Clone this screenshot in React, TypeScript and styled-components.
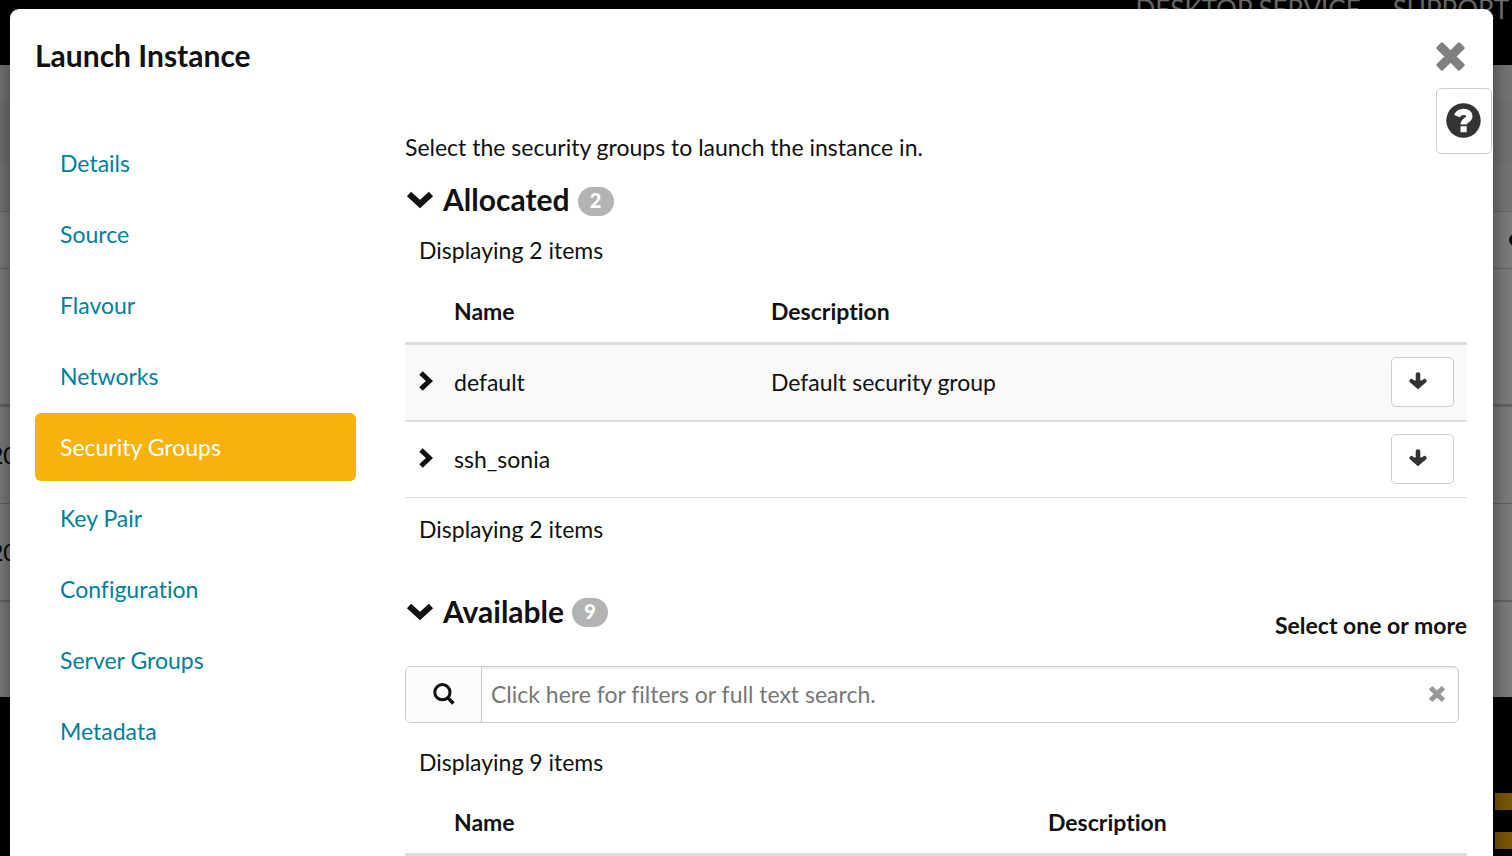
import React from "react";
import styled, { createGlobalStyle } from "styled-components";

const Global = createGlobalStyle`
  * { box-sizing: border-box; }
  body {
    margin: 0;
    background: #000;
    color: #111;
    font: 400 23px/32px Lato, "Open Sans", sans-serif;
    font-variant-ligatures: none;
    overflow: hidden;
  }
  button, input { font: inherit; color: inherit; }
`;

const Backdrop = styled.div`
  position: absolute;
  inset: 0;
  background: rgba(0, 0, 0, 0.5);
`;
const Page = styled.div`
  position: relative;
  min-height: 100vh;
  overflow: hidden;
  background: #000;
`;
const SiteHeader = styled.header`
  height: 65px;
  display: flex;
  justify-content: flex-end;
  gap: 32px;
  padding: 0 3px;
  color: #ddd;
  font-size: 26px;
  line-height: 18px;
`;
const SiteBody = styled.div`
  height: 632px;
  background: #fff;
  display: flex;
  flex-direction: column;
`;
const Band = styled.div<{ $h: number; $bg?: string; $line?: number }>`
  height: ${(p) => p.$h}px;
  background: ${(p) => p.$bg ?? "#fff"};
  border-bottom: ${(p) => p.$line ?? 0}px solid #ccc;
  display: flex;
  align-items: center;
`;
const DateCell = styled.span`
  margin-left: -10px;
`;
const Dot = styled.span`
  width: 12px;
  height: 12px;
  margin-left: auto;
  margin-right: -9px;
  border-radius: 50%;
  background: #111;
`;
const SiteFooter = styled.footer`
  height: 159px;
  display: flex;
  justify-content: flex-end;
  align-items: flex-end;
  padding-bottom: 7px;
`;

const Modal = styled.div`
  position: absolute;
  top: 9px;
  left: 10px;
  right: 19px;
  min-height: 1000px;
  background: #fff;
  border-radius: 9px;
  box-shadow: 0 8px 24px rgba(0, 0, 0, 0.5);
  padding: 0 25px;
`;
const ModalHeader = styled.header`
  display: flex;
  justify-content: space-between;
  align-items: center;
  height: 95px;
  padding-right: 3px;
`;
const Title = styled.h1`
  margin: 0;
  padding-bottom: 4px;
  font-size: 30px;
  line-height: 40px;
  font-weight: 700;
`;
const IconButton = styled.button`
  border: 0;
  background: none;
  padding: 0;
  display: flex;
  color: #808080;
`;
const HelpButton = styled.button`
  position: absolute;
  top: 79px;
  right: 1px;
  width: 56px;
  height: 66px;
  padding: 0 2px 2px 0;
  display: flex;
  align-items: center;
  justify-content: center;
  background: #fff;
  border: 1px solid #ccc;
  border-radius: 5px;
`;
const Columns = styled.div`
  display: grid;
  grid-template-columns: 321px minmax(0, 1fr);
  column-gap: 49px;
`;
const Steps = styled.nav`
  display: flex;
  flex-direction: column;
  gap: 3px;
  padding-top: 25px;
`;
const Step = styled.a<{ $active?: boolean }>`
  height: 68px;
  padding: 18px 25px;
  border-radius: 6px;
  text-decoration: none;
  color: ${(p) => (p.$active ? "#fff" : "#00809b")};
  background: ${(p) => (p.$active ? "#f8b20e" : "transparent")};
`;
const Main = styled.main`
  padding: 27px 1px 0 0;
`;
const Intro = styled.p`
  margin: 0;
`;
const Section = styled.section`
  margin-top: 16px;
  & + & { margin-top: 46px; }
`;
const SectionTitle = styled.h2`
  margin: 0;
  display: flex;
  align-items: center;
  gap: 8px;
  font-size: 30px;
  line-height: 40px;
  font-weight: 700;
`;
const Badge = styled.span`
  width: 36px;
  height: 29px;
  margin-top: 4px;
  border-radius: 15px;
  background: #b3b3b3;
  color: #fff;
  font-size: 20px;
  font-weight: 900;
  line-height: 27px;
  text-align: center;
`;
const Count = styled.p`
  margin: 0;
  padding: 15px 14px 0;
`;
const Table = styled.table`
  width: 100%;
  border-collapse: collapse;
  table-layout: fixed;
`;
const Th = styled.th<{ $w?: string }>`
  width: ${(p) => p.$w ?? "auto"};
  height: 77px;
  padding: 14px 13px 0 0;
  text-align: left;
  font-weight: 700;
  border-bottom: 3px solid #ddd;
`;
const Row = styled.tr`
  height: 76px;
  border-bottom: 1px solid #ddd;
  &:nth-child(odd) { height: 78px; background: #f9f9f9; border-bottom-width: 2px; }
`;
const Td = styled.td<{ $right?: boolean }>`
  padding: 0 13px 0 0;
  text-align: ${(p) => (p.$right ? "right" : "left")};
`;
const Expand = styled(IconButton)`
  color: #111;
  padding-left: 14px;
`;
const MoveButton = styled.button`
  width: 63px;
  height: 50px;
  padding: 0 9px 2px 0;
  display: inline-flex;
  align-items: center;
  justify-content: center;
  vertical-align: middle;
  background: #fff;
  border: 1px solid #ccc;
  border-radius: 5px;
`;
const Hint = styled.div`
  text-align: right;
  font-weight: 700;
  margin-top: -22px;
`;
const Search = styled.div`
  display: flex;
  height: 57px;
  margin: 25px 8px 8px 0;
  border: 1px solid #ccc;
  border-radius: 6px;
  overflow: hidden;
`;
const SearchLabel = styled.label`
  width: 76px;
  display: flex;
  align-items: center;
  justify-content: center;
  background: #fcfcfc;
  border-right: 1px solid #ccc;
`;
const SearchField = styled.div`
  flex: 1;
  display: flex;
  align-items: center;
  padding-right: 13px;
  box-shadow: inset 0 2px 2px rgba(0, 0, 0, 0.08);
`;
const SearchInput = styled.input`
  flex: 1;
  border: 0;
  outline: 0;
  background: none;
  padding: 0 9px;
  &::placeholder { color: #777; opacity: 1; }
`;

const Cross = ({ size, color }: { size: number; color: string }) => (
  <svg width={size} height={size} viewBox="0 0 29 29" fill={color} stroke={color} strokeWidth="3" strokeLinejoin="round" aria-hidden="true">
    <path d="M6 1.8 14.5 10.3 23 1.8 27.2 6 18.7 14.5 27.2 23 23 27.2 14.5 18.7 6 27.2 1.8 23 10.3 14.5 1.8 6z" />
  </svg>
);
const ChevronDown = () => (
  <svg width="30" height="20" viewBox="0 0 30 20" fill="none" stroke="#111" strokeWidth="6.2" aria-hidden="true">
    <path d="M4 5 15 15 26 5" />
  </svg>
);
const ChevronRight = () => (
  <svg width="14" height="22" viewBox="0 0 14 22" fill="none" stroke="#111" strokeWidth="5" aria-hidden="true">
    <path d="M2 2 10.4 10 2 18" />
  </svg>
);
const ArrowDown = () => (
  <svg width="18" height="18" viewBox="0 0 18 18" fill="none" stroke="#333" strokeLinecap="round" aria-hidden="true">
    <path d="M9 2.6V12" strokeWidth="4.6" />
    <path d="M2.5 9 9 14.4 15.5 9" strokeWidth="4.2" strokeLinejoin="miter" />
    <path d="M3.5 9h11L9 14.6z" fill="#333" strokeWidth="1" />
  </svg>
);
const Magnifier = () => (
  <svg width="22" height="22" viewBox="0 0 22 22" fill="none" stroke="#111" aria-hidden="true">
    <circle cx="9.4" cy="9.2" r="7.6" strokeWidth="3" />
    <path d="M14.6 14.6 20.4 20.6" strokeWidth="3.6" />
  </svg>
);
const Question = () => (
  <svg width="35" height="35" viewBox="0 0 35 35" aria-hidden="true">
    <circle cx="17.5" cy="17.5" r="17.2" fill="#333" />
    <path d="M11 13.2C12.2 10.2 14.3 8.9 17.6 8.9c3.6 0 5.8 1.6 5.8 4.3 0 4.1-5.8 4.1-5.8 8.4" fill="none" stroke="#fff" strokeWidth="6.2" />
    <path d="M14.5 23.2h6.2v6h-6.2z" fill="#fff" />
  </svg>
);

const steps = ["Details", "Source", "Flavour", "Networks", "Security Groups", "Key Pair", "Configuration", "Server Groups", "Metadata"];
const allocated = [
  { name: "default", description: "Default security group" },
  { name: "ssh_sonia", description: "" },
];

export default function App() {
  return (
    <Page>
      <Global />
      <SiteHeader>
        <span>DESKTOP SERVICE</span>
        <span>SUPPORT</span>
      </SiteHeader>
      <SiteBody>
        <Band $h={35} $bg="#f0f0f0" />
        <Band $h={62} $bg="#e8e8e8" />
        <Band $h={50} $bg="#f0f0f0" $line={1} />
        <Band $h={57} $line={1}><Dot /></Band>
        <Band $h={138} $line={3} />
        <Band $h={97} $line={1}><DateCell>20</DateCell></Band>
        <Band $h={98} $line={2}><DateCell>20</DateCell></Band>
      </SiteBody>
      <SiteFooter>
        <svg width="17" height="56" viewBox="0 0 17 56" fill="#f8b20e" aria-hidden="true">
          <path d="M0 0H17V17H0zM0 39H17V56H0z" />
        </svg>
      </SiteFooter>
      <Backdrop />
      <Modal role="dialog" aria-labelledby="dialog-title">
        <ModalHeader>
          <Title id="dialog-title">Launch Instance</Title>
          <IconButton aria-label="Close"><Cross size={29} color="#808080" /></IconButton>
        </ModalHeader>
        <HelpButton aria-label="Help"><Question /></HelpButton>
        <Columns>
          <Steps>
            {steps.map((s) => (
              <Step key={s} href="#" $active={s === "Security Groups"}>{s}</Step>
            ))}
          </Steps>
          <Main>
            <Intro>Select the security groups to launch the instance in.</Intro>
            <Section>
              <SectionTitle><ChevronDown />Allocated<Badge>2</Badge></SectionTitle>
              <Count>Displaying 2 items</Count>
              <Table>
                <thead>
                  <tr><Th $w="49px" /><Th $w="317px">Name</Th><Th>Description</Th><Th $w="90px" /></tr>
                </thead>
                <tbody>
                  {allocated.map((g) => (
                    <Row key={g.name}>
                      <Td><Expand aria-label="Expand"><ChevronRight /></Expand></Td>
                      <Td>{g.name}</Td>
                      <Td>{g.description}</Td>
                      <Td $right><MoveButton aria-label="Remove"><ArrowDown /></MoveButton></Td>
                    </Row>
                  ))}
                </tbody>
              </Table>
              <Count>Displaying 2 items</Count>
            </Section>
            <Section>
              <SectionTitle><ChevronDown />Available<Badge>9</Badge></SectionTitle>
              <Hint>Select one or more</Hint>
              <Search>
                <SearchLabel htmlFor="search" aria-label="Search"><Magnifier /></SearchLabel>
                <SearchField>
                  <SearchInput id="search" placeholder="Click here for filters or full text search." />
                  <IconButton aria-label="Clear"><Cross size={16} color="#999" /></IconButton>
                </SearchField>
              </Search>
              <Count>Displaying 9 items</Count>
              <Table>
                <thead>
                  <tr><Th $w="49px" /><Th $w="594px">Name</Th><Th>Description</Th></tr>
                </thead>
              </Table>
            </Section>
          </Main>
        </Columns>
      </Modal>
    </Page>
  );
}
